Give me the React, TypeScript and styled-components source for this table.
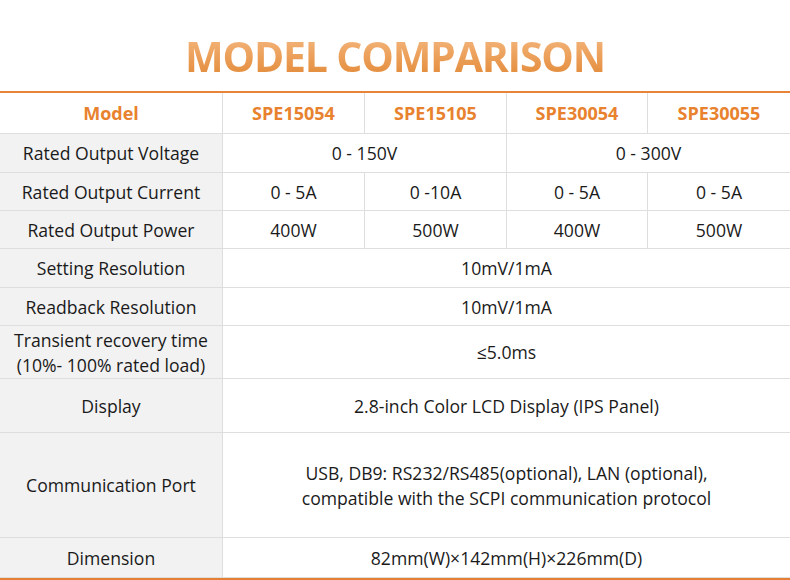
import React from "react";
import styled, { createGlobalStyle } from "styled-components";

const Global = createGlobalStyle`
  html, body { margin: 0; padding: 0; background: #ffffff; }
  body { font-family: "Open Sans", "Noto Sans", sans-serif; }
`;

const Page = styled.div`
  width: 790px;
  height: 580px;
  overflow: hidden;
  background: #fff;
`;

const TitleBar = styled.header`
  height: 91px;
  box-sizing: border-box;
  padding-top: 28px;
  display: flex;
  justify-content: center;
  align-items: flex-start;
`;

const TitleText = styled.h1`
  margin: 0;
  display: inline-block;
  font-family: "Open Sans", sans-serif;
  font-weight: 700;
  font-size: 41px;
  line-height: 56px;
  letter-spacing: -1.2px;
  background: linear-gradient(180deg, #f6c08c 0%, #eda35f 45%, #e0842f 100%);
  -webkit-background-clip: text;
  background-clip: text;
  color: transparent;
`;

const Grid = styled.div`
  display: grid;
  grid-template-columns: 222px 142px 142px 141px 143px;
  grid-template-rows: 41px 39px 38px 38px 39px 38px 53px 54px 105px 40px;
  border-top: 2px solid #e8843a;
  border-bottom: 3px solid #e47f33;
`;

const Cell = styled.div<{ $span?: number; $label?: boolean; $head?: boolean }>`
  grid-column: span ${(p) => p.$span ?? 1};
  display: flex;
  align-items: center;
  justify-content: center;
  text-align: center;
  box-sizing: border-box;
  border-bottom: 1px solid #dedede;
  border-left: 1px solid #dedede;
  background: ${(p) => (p.$label ? "#f2f2f2" : "#ffffff")};
  color: ${(p) => (p.$head ? "#e8822e" : "#1a1a1a")};
  font-weight: ${(p) => (p.$head ? 700 : 400)};
  font-size: ${(p) => (p.$head ? "18px" : "17.6px")};
  line-height: 25px;
  padding-top: 1px;
`;

const LabelCell = styled(Cell)`
  border-left: none;
`;

type Row = { label: string; cells: [string, number][]; head?: boolean };

const rows: Row[] = [
  {
    label: "Model",
    head: true,
    cells: [
      ["SPE15054", 1],
      ["SPE15105", 1],
      ["SPE30054", 1],
      ["SPE30055", 1],
    ],
  },
  { label: "Rated Output Voltage", cells: [["0 - 150V", 2], ["0 - 300V", 2]] },
  {
    label: "Rated Output Current",
    cells: [
      ["0 - 5A", 1],
      ["0 -10A", 1],
      ["0 - 5A", 1],
      ["0 - 5A", 1],
    ],
  },
  {
    label: "Rated Output Power",
    cells: [
      ["400W", 1],
      ["500W", 1],
      ["400W", 1],
      ["500W", 1],
    ],
  },
  { label: "Setting Resolution", cells: [["10mV/1mA", 4]] },
  { label: "Readback Resolution", cells: [["10mV/1mA", 4]] },
  {
    label: "Transient recovery time\n(10%- 100% rated load)",
    cells: [["≤5.0ms", 4]],
  },
  { label: "Display", cells: [["2.8-inch Color LCD Display (IPS Panel)", 4]] },
  {
    label: "Communication Port",
    cells: [
      [
        "USB, DB9: RS232/RS485(optional), LAN (optional),\ncompatible with the SCPI communication protocol",
        4,
      ],
    ],
  },
  { label: "Dimension", cells: [["82mm(W)×142mm(H)×226mm(D)", 4]] },
];

const Lines = ({ text }: { text: string }) => (
  <span>
    {text.split("\n").map((t, i) => (
      <React.Fragment key={i}>
        {i > 0 && <br />}
        {t}
      </React.Fragment>
    ))}
  </span>
);

export default function App() {
  return (
    <Page>
      <Global />
      <TitleBar>
        <TitleText>MODEL COMPARISON</TitleText>
      </TitleBar>
      <Grid>
        {rows.map((r, ri) => (
          <React.Fragment key={ri}>
            <LabelCell $label={!r.head} $head={r.head}>
              <Lines text={r.label} />
            </LabelCell>
            {r.cells.map(([t, s], ci) => (
              <Cell key={ci} $span={s} $head={r.head}>
                <Lines text={t} />
              </Cell>
            ))}
          </React.Fragment>
        ))}
      </Grid>
    </Page>
  );
}
